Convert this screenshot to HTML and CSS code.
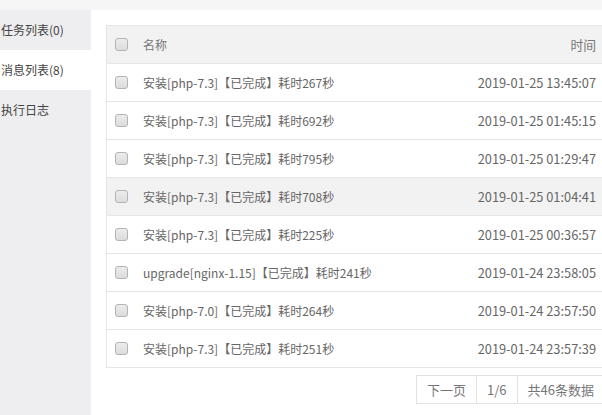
FILE: index.html
```html
<!DOCTYPE html>
<html lang="zh-CN">
    <head>
        <meta charset="utf-8">
        <title>消息列表</title>
        <link rel="stylesheet" href="styles.css">
    </head>
    <body>
        <div class="topbar"></div>
        <div class="wrap">
            <ul class="side-menu">
                <li>任务列表(0)</li>
                <li class="active">消息列表(8)</li>
                <li>执行日志</li>
            </ul>
            <div class="content">
                <table class="msg-table">
                    <thead>
                        <tr>
                            <th class="col-check"><span class="checkbox"></span></th>
                            <th class="col-name">名称</th>
                            <th class="col-time">时间</th>
                        </tr>
                    </thead>
                    <tbody>
                        <tr>
                            <td class="col-check"><span class="checkbox"></span></td>
                            <td class="col-name">安装[php-7.3]【已完成】耗时267秒</td>
                            <td class="col-time">2019-01-25 13:45:07</td>
                        </tr>
                        <tr>
                            <td class="col-check"><span class="checkbox"></span></td>
                            <td class="col-name">安装[php-7.3]【已完成】耗时692秒</td>
                            <td class="col-time">2019-01-25 01:45:15</td>
                        </tr>
                        <tr>
                            <td class="col-check"><span class="checkbox"></span></td>
                            <td class="col-name">安装[php-7.3]【已完成】耗时795秒</td>
                            <td class="col-time">2019-01-25 01:29:47</td>
                        </tr>
                        <tr class="hover">
                            <td class="col-check"><span class="checkbox"></span></td>
                            <td class="col-name">安装[php-7.3]【已完成】耗时708秒</td>
                            <td class="col-time">2019-01-25 01:04:41</td>
                        </tr>
                        <tr>
                            <td class="col-check"><span class="checkbox"></span></td>
                            <td class="col-name">安装[php-7.3]【已完成】耗时225秒</td>
                            <td class="col-time">2019-01-25 00:36:57</td>
                        </tr>
                        <tr>
                            <td class="col-check"><span class="checkbox"></span></td>
                            <td class="col-name">upgrade[nginx-1.15]【已完成】耗时241秒</td>
                            <td class="col-time">2019-01-24 23:58:05</td>
                        </tr>
                        <tr>
                            <td class="col-check"><span class="checkbox"></span></td>
                            <td class="col-name">安装[php-7.0]【已完成】耗时264秒</td>
                            <td class="col-time">2019-01-24 23:57:50</td>
                        </tr>
                        <tr>
                            <td class="col-check"><span class="checkbox"></span></td>
                            <td class="col-name">安装[php-7.3]【已完成】耗时251秒</td>
                            <td class="col-time">2019-01-24 23:57:39</td>
                        </tr>
                    </tbody>
                </table>
                <div class="pager-row">
                    <div class="pager">
                        <span>下一页</span>
                        <span>1/6</span>
                        <span>共46条数据</span>
                    </div>
                </div>
            </div>
        </div>
    </body>
</html>
```

FILE: styles.css
```css
html, body {
    margin: 0;
    padding: 0;
    height: 100%;
    overflow: hidden;
}

body {
    font-family: "Noto Sans CJK SC", "Liberation Sans", sans-serif;
    font-size: 12px;
    color: #666;
    background-color: #fff;
}

.topbar {
    height: 10px;
    background-color: #f6f6f6;
}

.wrap {
    display: flex;
    height: calc(100% - 10px);
}

.side-menu {
    width: 91px;
    flex-shrink: 0;
    margin: 0;
    padding: 0;
    list-style-type: none;
    background-color: #eeeef0;
}

.side-menu li {
    height: 40px;
    line-height: 40px;
    padding-left: 1px;
    color: #444;
    white-space: nowrap;
}

.side-menu .active {
    background-color: #fff;
}

.content {
    flex: 1;
    padding: 15px 0 0 15px;
    overflow: hidden;
}

.msg-table {
    width: 506px;
    border-collapse: collapse;
    border: 1px solid #e6e6e6;
}

.msg-table th,
.msg-table td {
    height: 37px;
    padding: 0;
    border-bottom: 1px solid #e6e6e6;
    font-weight: normal;
    white-space: nowrap;
}

.msg-table thead tr,
.msg-table tr.hover {
    background-color: #f2f2f2;
}

.msg-table th {
    color: #777;
}

.col-check {
    width: 28px;
    padding-left: 8px !important;
    text-align: left;
}

.col-name {
    text-align: left;
}

.col-time {
    text-align: right;
    font-size: 12.8px;
    padding-right: 15px !important;
}

.checkbox {
    display: block;
    width: 11px;
    height: 11px;
    border: 1px solid #b4b4b4;
    border-radius: 3px;
    background: linear-gradient(#ececec, #dcdcdc);
}

.pager-row {
    width: 499px;
    display: flex;
    justify-content: flex-end;
    margin-top: 7px;
}

.pager {
    display: flex;
    border: 1px solid #e2e2e2;
    color: #777;
    font-size: 13px;
    background-color: #fff;
}

.pager span {
    line-height: 27px;
    padding: 0 10px;
    white-space: nowrap;
}

.pager span + span {
    border-left: 1px solid #e2e2e2;
}
```
